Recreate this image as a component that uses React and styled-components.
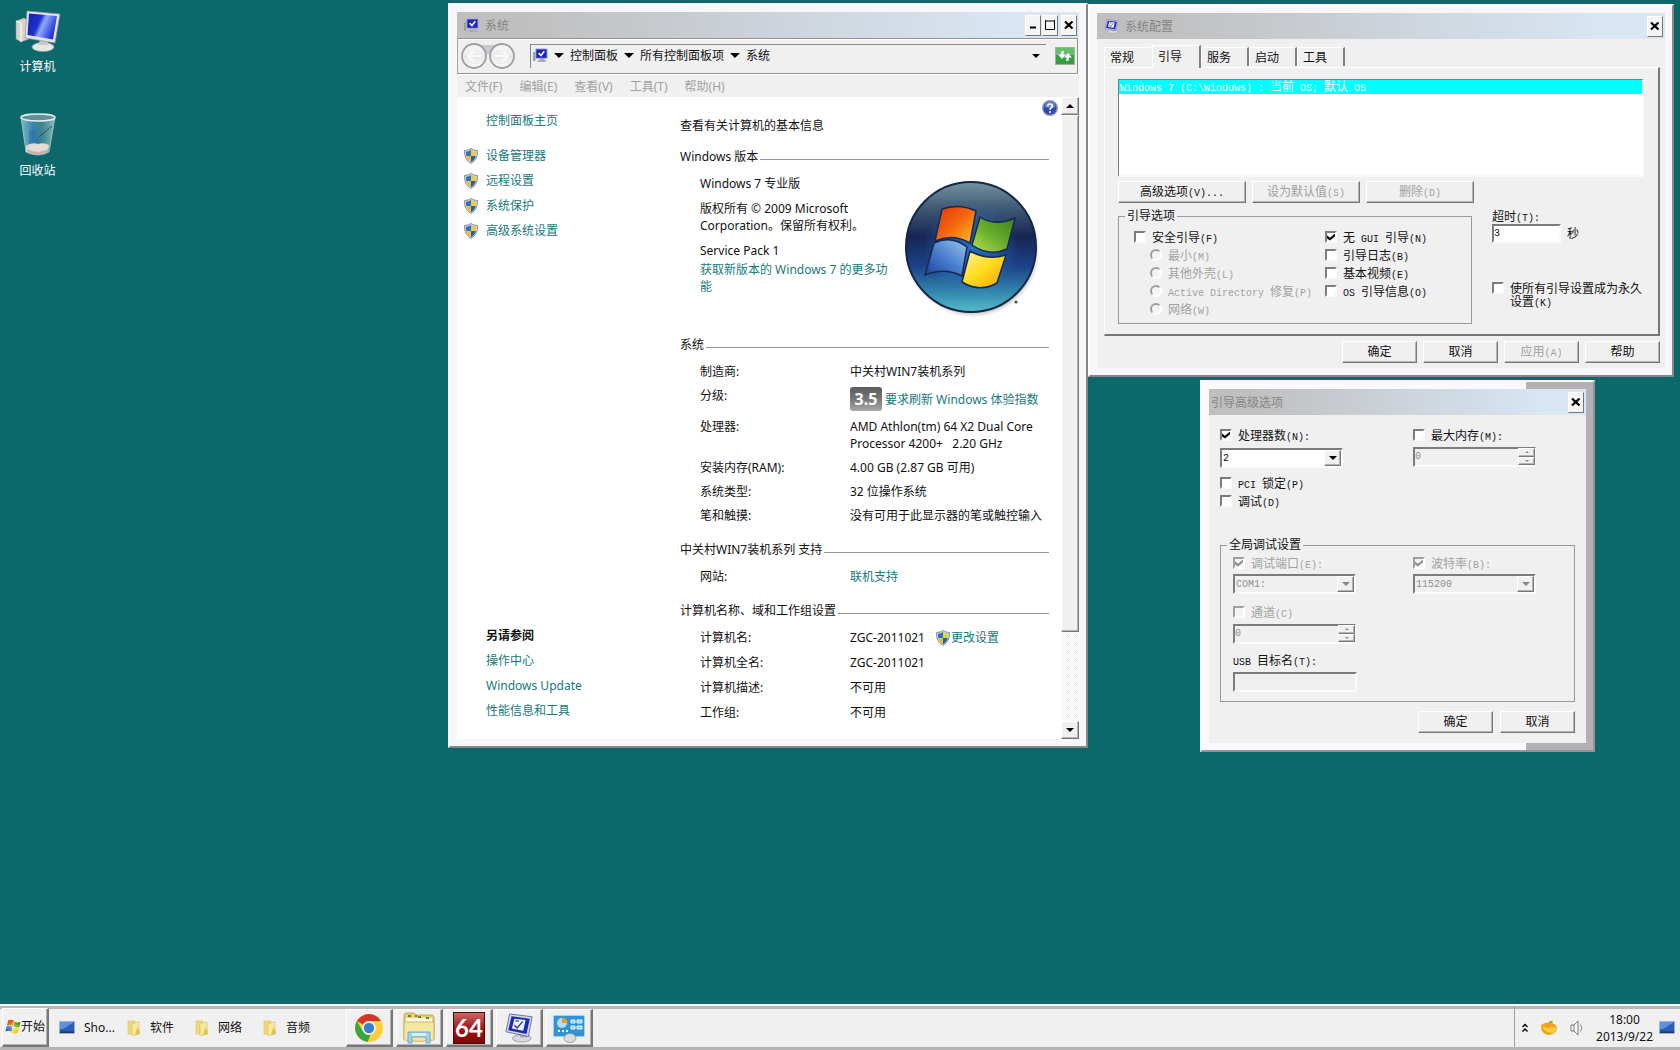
import { useState } from "react";
import styled, { createGlobalStyle, css } from "styled-components";

const GlobalStyle = createGlobalStyle`
  * {
    box-sizing: border-box;
  }
  body {
    margin: 0;
    font-family: "Noto Sans", "Noto Sans CJK SC", sans-serif;
    font-size: 12px;
    line-height: 17px;
    color: #111;
  }
  button, input, select {
    font: inherit;
    color: inherit;
    margin: 0;
    padding: 0;
  }
`;

const Desktop = styled.div`
  position: relative;
  display: flex;
  flex-direction: column;
  min-height: 100vh;
  overflow: hidden;
  background: #0d686b;
`;

const Shortcuts = styled.div`
  flex: 1;
  display: flex;
  flex-direction: column;
  align-items: flex-start;
  gap: 38px;
  padding-top: 9px;
`;

const Shortcut = styled.button`
  width: 75px;
  display: flex;
  flex-direction: column;
  align-items: center;
  gap: 5px;
  border: 0;
  background: none;
  color: #fff;
`;

/* ---------- shared window parts ---------- */

const Frame = styled.section`
  position: absolute;
  left: ${(p) => p.$x}px;
  top: ${(p) => p.$y}px;
  width: ${(p) => p.$width}px;
  padding: 7px;
  border: 2px solid;
  border-color: #fff #86868c #86868c #fff;
  background: #f7f7f9;
`;

const ShadedFrame = styled(Frame)`
  border-color: #fcfcfe #96949a #96949a #fcfcfe;
  background: linear-gradient(90deg, #fafafc 324px, #b4b0b4 324px);
`;

const Inner = styled.div`
  background: #f0f0f0;
`;

const TitleBar = styled.header`
  display: flex;
  align-items: center;
  height: 26px;
  padding: 0 2px 0 ${(p) => (p.$plain ? 2 : 7)}px;
  background: linear-gradient(90deg, #bfbfbf 10%, #d9e6f4 90%);
`;

const Title = styled.h1`
  flex: 1;
  margin: 0 0 0 ${(p) => (p.$plain ? 0 : 6)}px;
  font-size: 12px;
  font-weight: normal;
  color: #858585;
`;

const CaptionButton = styled.button`
  display: flex;
  align-items: center;
  justify-content: center;
  width: 16px;
  height: 21px;
  margin-left: ${(p) => (p.$apart ? 3 : 1)}px;
  border: 1px solid;
  border-color: #fff #777 #777 #fff;
  background: #f4f4f4;
`;

const raised = css`
  border: 1px solid;
  border-color: #fff #777 #777 #fff;
  box-shadow: inset -1px -1px 0 #b4b4b4;
  background: #f0f0f0;
`;

const sunken = css`
  border: 2px solid;
  border-color: #7c7c7c #fafafa #fafafa #7c7c7c;
  outline: 0;
`;

const Close = ({ apart }) => (
  <CaptionButton $apart={apart} aria-label="关闭">
    <svg width="10" height="8" viewBox="0 0 10 8">
      <path d="M1 0.5 8.500 7.500M8.500 0.500 1 7.500" stroke="#000" strokeWidth="2.200" />
    </svg>
  </CaptionButton>
);

const Triangle = ({ size = 10, up, color = "#000" }) => (
  <svg width={size} height={size / 2} viewBox="0 0 10 5">
    <path d={up ? "M0 5h10L5 0z" : "M0 0h10L5 5z"} fill={color} />
  </svg>
);

/* ---------- icons ---------- */

const ComputerIcon = () => (
  <svg width="46" height="44" viewBox="0 0 46 44">
    <defs>
      <linearGradient id="screen" x1="0" y1="0" x2="1" y2="0.4">
        <stop offset="0" stopColor="#1720a8" />
        <stop offset="0.45" stopColor="#2030cc" />
        <stop offset="0.6" stopColor="#8fa8ff" />
        <stop offset="1" stopColor="#2438d0" />
      </linearGradient>
    </defs>
    <path d="M1 12 9 9l5 3v18l-8 3-5-3z" fill="#d8d6cc" stroke="#8d8d86" strokeWidth="0.6" />
    <path d="M1 12l5 2v19" fill="none" stroke="#fff" />
    <ellipse cx="28" cy="38" rx="11" ry="4.500" fill="#e9e8e4" stroke="#999" strokeWidth="0.6" />
    <path d="M25 28h8v8h-9z" fill="#c9c8c4" />
    <path d="M12 2 45 5 40 34 10 29z" fill="#e5e4ee" stroke="#8b8ba0" strokeWidth="0.7" />
    <path d="M14 4.500 42 7 38 30.500 12.500 26z" fill="url(#screen)" />
  </svg>
);

const BinIcon = () => (
  <svg width="38" height="44" viewBox="0 0 38 44">
    <defs>
      <linearGradient id="glass" x1="0" y1="0" x2="1" y2="0">
        <stop offset="0" stopColor="#a9d4e4" stopOpacity="0.7" />
        <stop offset="0.35" stopColor="#3d86b4" stopOpacity="0.9" />
        <stop offset="0.6" stopColor="#5f9fae" stopOpacity="0.5" />
        <stop offset="1" stopColor="#b5d6d8" stopOpacity="0.8" />
      </linearGradient>
    </defs>
    <path d="M2 4 7 39q12 6 23 0L36 4z" fill="url(#glass)" stroke="#a9c8cc" strokeWidth="0.8" />
    <path d="M10 18q8-5 8 4l3 8-11 4z" fill="#2d6fb0" opacity="0.6" />
    <path d="M7 33q5-4 12-2 6-2 11 1l-1 6q-11 6-22 1z" fill="#e3dcd6" />
    <path d="M8 36q11 6 21 0l-1 4q-10 4-19 0z" fill="#c6b3ab" />
    <path d="M20 24 33 13" stroke="#3e4a50" />
    <ellipse cx="19" cy="4.500" rx="17" ry="3.500" fill="#63919a" stroke="#e6eef0" strokeWidth="1.400" />
  </svg>
);

const MonitorIcon = ({ size = 15 }) => (
  <svg width={size} height={size} viewBox="0 0 16 16">
    <path d="M0 4h3v10H0z" fill="#bbc2b8" />
    <path d="M1 5v8" stroke="#58645c" strokeDasharray="2 1" />
    <path d="M3 1h12v10H3z" fill="#1b24bb" stroke="#aab0d8" />
    <path d="M6 5.500 8.500 8 12 3.500" fill="none" stroke="#fff" strokeWidth="1.700" />
    <path d="M7 11h5v2h2v2H5v-2h2z" fill="#a9aac0" />
  </svg>
);

const ConfigIcon = ({ size = 15 }) => (
  <svg width={size} height={size} viewBox="0 0 32 32">
    <ellipse cx="19" cy="27" rx="10" ry="4" fill="#d8d8dc" stroke="#8e8e98" strokeWidth="0.8" />
    <path d="M17 20h8v6h-8z" fill="#a8a8b0" />
    <path d="M6 1 30 4 26 25 2 20z" fill="#d4d6ea" stroke="#6a6ea0" />
    <path d="M8 3.500 27.500 6 24 22.500 4.500 18.500z" fill="#1a2bb4" />
    <path d="M11 6 23 7.500 20.500 19 8.500 16.500z" fill="#eef2fb" />
    <path d="M11 13l3 3 6-7" fill="none" stroke="#25349c" strokeWidth="1.400" />
    <path d="M12 8.500h4" stroke="#25349c" strokeWidth="1.200" />
  </svg>
);

const Shield = () => (
  <svg width="14" height="16" viewBox="0 0 14 16">
    <path d="M7 0.500Q9.500 2.500 13.500 2.500 14 11.500 7 15.500 0 11.500 0.500 2.500 4.500 2.500 7 0.500z" fill="#d0d5da" stroke="#7d8894" strokeWidth="0.9" />
    <path d="M7 2Q5 3.500 2 3.700 2 6 2.300 8H7z" fill="#2c73c4" />
    <path d="M7 2Q9 3.500 12 3.700 12 6 11.700 8H7z" fill="#f5cc3c" />
    <path d="M2.300 8Q3 12 7 14.200V8z" fill="#f0bf2d" />
    <path d="M11.700 8Q11 12 7 14.200V8z" fill="#2261b2" />
  </svg>
);

const panes = [
  ["M37 28Q54 22 71 30L65 62Q48 52 30 60z", "paneRed"],
  ["M75 36Q90 46 110 37L102 68Q85 76 67 64z", "paneGreen"],
  ["M29 62Q46 54 62 66L57 95Q40 86 20 94z", "paneBlue"],
  ["M65 70Q82 80 101 74L92 102Q75 112 57 101z", "paneYellow"],
];

const LogoPanes = ({ outline }) =>
  panes.map(([d, id]) => (
    <path key={id} d={d} fill={`url(#${id})`} stroke={outline} strokeWidth="1.500" />
  ));

const WindowsLogo = () => (
  <svg width="138" height="138" viewBox="0 0 138 138">
    <defs>
      <linearGradient id="orb" x1="0" y1="0" x2="0" y2="1">
        <stop offset="0" stopColor="#7593a0" />
        <stop offset="0.2" stopColor="#3f5a74" />
        <stop offset="0.42" stopColor="#172554" />
        <stop offset="0.65" stopColor="#1c4288" />
        <stop offset="0.85" stopColor="#3388ae" />
        <stop offset="1" stopColor="#55bccb" />
      </linearGradient>
      <radialGradient id="orbShadow">
        <stop offset="0.88" stopColor="#555" stopOpacity="0.6" />
        <stop offset="1" stopColor="#fff" stopOpacity="0" />
      </radialGradient>
      <radialGradient id="glow">
        <stop offset="0" stopColor="#2d7fd0" stopOpacity="0.8" />
        <stop offset="1" stopColor="#2d7fd0" stopOpacity="0" />
      </radialGradient>
      <linearGradient id="paneRed" x1="0" y1="0" x2="1" y2="1">
        <stop offset="0" stopColor="#e2330c" />
        <stop offset="0.5" stopColor="#f4670f" />
        <stop offset="1" stopColor="#fdc52c" />
      </linearGradient>
      <linearGradient id="paneGreen" x1="1" y1="0" x2="0" y2="1">
        <stop offset="0" stopColor="#3d7f1c" />
        <stop offset="0.5" stopColor="#67ab2c" />
        <stop offset="1" stopColor="#b5e04e" />
      </linearGradient>
      <linearGradient id="paneBlue" x1="1" y1="0" x2="0" y2="1">
        <stop offset="0" stopColor="#9cc4ec" />
        <stop offset="0.5" stopColor="#4a80cf" />
        <stop offset="1" stopColor="#1c3f96" />
      </linearGradient>
      <linearGradient id="paneYellow" x1="0" y1="0" x2="1" y2="1">
        <stop offset="0" stopColor="#fff39a" />
        <stop offset="0.5" stopColor="#ffdc1c" />
        <stop offset="1" stopColor="#f39a10" />
      </linearGradient>
    </defs>
    <circle cx="68" cy="70" r="68" fill="url(#orbShadow)" />
    <circle cx="66" cy="66" r="65" fill="url(#orb)" stroke="#14264a" strokeWidth="2" />
    <circle cx="66" cy="68" r="48" fill="url(#glow)" />
    <LogoPanes outline="#16294f" />
    <circle cx="111" cy="121" r="1.500" fill="#444" />
  </svg>
);

const StartFlag = () => (
  <svg width="16" height="15" viewBox="18 22 94 86">
    <LogoPanes />
  </svg>
);

const RefreshIcon = () => (
  <svg width="20" height="18" viewBox="0 0 20 18">
    <rect x="0.5" y="0.5" width="19" height="17" fill="#35a043" stroke="#9bb49b" />
    <path d="M1 1h18v7H1z" fill="#67be6c" />
    <path d="M9 4H8Q6 4 6 6v1.500H3l4 4.500 4-4.500H8.500V6z" fill="#fff" />
    <path d="M11 14h1q2 0 2-2v-1.500h3L13 6 9 10.500h2.500V12z" fill="#fff" />
  </svg>
);

const HelpIcon = () => (
  <svg width="16" height="16" viewBox="0 0 16 16">
    <circle cx="8" cy="8" r="7.300" fill="#2b48b4" stroke="#8f98b4" strokeWidth="1.400" />
    <path d="M2.500 7a5.500 5.500 0 0 1 11 0q-5 2-11 0z" fill="#7f9be4" opacity="0.7" />
    <path d="M5.700 6.300Q5.800 4 8 4t2.300 2q0 1.300-1.300 2-1 .6-1 1.700" fill="none" stroke="#fff" strokeWidth="1.700" />
    <circle cx="8" cy="12" r="1.100" fill="#fff" />
  </svg>
);

const NavCircles = () => (
  <svg width="56" height="28" viewBox="0 0 56 28">
    <defs>
      <linearGradient id="nav" x1="0" y1="0" x2="0" y2="1">
        <stop offset="0" stopColor="#fbfbfb" />
        <stop offset="0.5" stopColor="#e8e8ea" />
        <stop offset="1" stopColor="#fafafa" />
      </linearGradient>
    </defs>
    <path d="M18 3h20v3q-6 2-10 7-4-5-10-7z" fill="#c9c9cc" />
    {[14, 42].map((cx) => (
      <circle key={cx} cx={cx} cy="14" r="12" fill="url(#nav)" stroke="#9d9da2" strokeWidth="1.800" />
    ))}
    <path d="M21 14H8m5-5-5 5 5 5M35 14h13m-5-5 5 5-5 5" fill="none" stroke="#fafafa" strokeWidth="2" />
  </svg>
);

const FolderIcon = () => (
  <svg width="14" height="16" viewBox="0 0 14 16">
    <path d="M1 1h7v13H1z" fill="#f1d878" stroke="#dcc05c" strokeWidth="0.6" />
    <path d="M5 3.500 12 2v12l-7 2z" fill="#f8e8a0" stroke="#d9bd58" strokeWidth="0.6" />
    <path d="M10 8q3 1 3 6l-5 1z" fill="#e5c04a" />
  </svg>
);

const ScreenIcon = () => (
  <svg width="16" height="13" viewBox="0 0 16 13">
    <path d="M0.500 0.500h15v12h-15z" fill="#2b5fb4" stroke="#9cb2d4" />
    <path d="M1 1h14L4 8H1z" fill="#5f92dc" />
    <path d="M1 10.500h14V12H1z" fill="#1c3566" />
  </svg>
);

const ChromeIcon = () => (
  <svg width="28" height="28" viewBox="0 0 28 28">
    <circle cx="14" cy="14" r="14" fill="#fbd03c" />
    <path d="M1.900 7A14 14 0 0 1 26.100 7H14a7 7 0 0 0-6.100 3.500z" fill="#d8352a" />
    <path d="M1.900 7 8 17.500A7 7 0 0 0 15.500 20.800L12.600 27.900A14 14 0 0 1 1.900 7z" fill="#37a446" />
    <circle cx="14" cy="14" r="6.800" fill="#f4f4f4" />
    <circle cx="14" cy="14" r="5.200" fill="#3a7fd0" />
  </svg>
);

const ExplorerIcon = () => (
  <svg width="32" height="32" viewBox="0 0 32 32">
    <path d="M1 4q0-3 2-3h8l2 2h16q2 0 2 3v21H1z" fill="#e9cf74" stroke="#b8983e" strokeWidth="0.8" />
    <path d="M3 6h26v5H3z" fill="#fdf8e0" />
    <path d="M1 10h30v18q-15 3-30 0z" fill="#f5e6a0" stroke="#c9ab52" strokeWidth="0.8" />
    <path d="M5 4h3M15 5h3M23 6h3" stroke="#3f9440" strokeWidth="1.800" />
    <path d="M12 4h2" stroke="#d2502c" strokeWidth="1.800" />
    <path d="M5 20h22v11h-4v-6H9v6H5z" fill="#9fd2ee" stroke="#5b9dc6" strokeWidth="0.8" />
    <path d="M9 21h14v3H9z" fill="#d8f0fb" />
  </svg>
);

const PanelIcon = () => (
  <svg width="32" height="30" viewBox="0 0 32 30">
    <rect x="0.5" y="2.500" width="31" height="21" rx="1" fill="#3293d4" stroke="#a7cfe6" />
    <circle cx="9" cy="10" r="5" fill="#b6dcf0" />
    <path d="M9 10V4.500a5.500 5.500 0 0 1 5.500 5.500z" fill="#f09a24" />
    <path d="M18 7h4v3h-4zM24 7h5v3h-5zM18 13h4v3h-4zM24 13h5v3h-5z" fill="#8fd0f2" stroke="#e6f6fd" />
    <path d="M5 18h2m2 0h2m2 0h2" stroke="#fff" strokeWidth="2" />
    <ellipse cx="17" cy="25" rx="6" ry="4.500" fill="#dcdcde" stroke="#8a8a8e" strokeWidth="0.8" />
  </svg>
);

const OrangeIcon = () => (
  <svg width="18" height="16" viewBox="0 0 18 16">
    <path d="M1 5q-1 8 7 10 8 0 9-7-1-5-7-5-5-1-9 2z" fill="#f7a01c" />
    <path d="M2 5q3 4 7 3 4-2 7 0 0 3-3 5-8 1-11-8z" fill="#fdd33a" />
    <path d="M8 3q2-3 5-2 0 3-5 2z" fill="#8db52c" />
  </svg>
);

const SpeakerIcon = () => (
  <svg width="15" height="16" viewBox="0 0 15 16">
    <path d="M1 5h3l4-4v14l-4-4H1zM4 5v6" fill="#f8f8f8" stroke="#777" />
    <path d="M10.500 4.500q3 3.500 0 7" fill="none" stroke="#888" />
  </svg>
);

/* ---------- system window ---------- */

const NavBand = styled.div`
  display: flex;
  align-items: center;
  height: 36px;
  margin-right: 1px;
  padding: 0 2px;
  border: 1px solid #929292;
  border-left-color: #a8a8a8;
  box-shadow: inset 0 1px 0 #fff, 0 1px 0 #fff;
`;

const Address = styled.nav`
  flex: 1;
  display: flex;
  align-items: center;
  gap: 6px;
  height: 24px;
  margin: 0 9px 0 14px;
  padding: 0 6px 2px 2px;
  border: 1px solid #8a8a8a;
  border-width: 1px 0 0 1px;
`;

const Crumb = styled.a`
  color: inherit;
  text-decoration: none;
`;

const Push = styled.span`
  margin-left: auto;
`;

const PlainButton = styled.button`
  display: flex;
  border: 0;
  background: none;
`;

const MenuBar = styled.div`
  display: flex;
  gap: 17px;
  height: 23px;
  padding: 2px 8px 0;
`;

const MenuButton = styled.button`
  border: 0;
  background: none;
  color: #a2a2a2;
`;

const SystemBody = styled.div`
  display: flex;
  background: #fff;
`;

const Side = styled.aside`
  display: flex;
  flex: none;
  flex-direction: column;
  justify-content: space-between;
  width: 223px;
  padding: 15px 0 20px 7px;
`;

const SideHome = styled.div`
  padding: 0 0 18px 22px;
`;

const SideList = styled.div`
  display: grid;
  grid-template-columns: 14px 1fr;
  gap: 8px;
  align-items: center;
`;

const AlsoList = styled.div`
  display: flex;
  flex-direction: column;
  gap: 8px;
  padding-left: 22px;
`;

const Link = styled.a`
  color: #16797b;
  text-decoration: none;
`;

const Main = styled.main`
  flex: 1;
  padding: 20px 0 18px;
`;

const Heading = styled.h2`
  margin: 0;
  font-size: 12px;
  font-weight: normal;
`;

const SectionTitle = styled.h3`
  display: flex;
  align-items: center;
  margin: ${(p) => p.$top}px 0 10px;
  font-size: 12px;
  font-weight: normal;

  &::after {
    content: "";
    flex: 1;
    margin: 5px 0 0 2px;
    border-top: 1px solid #949494;
  }
`;

const Edition = styled.div`
  display: flex;
  justify-content: space-between;
  padding-left: 20px;
  height: 120px;
`;

const EditionText = styled.div`
  width: 196px;

  p {
    margin: 0 0 8px;
  }
  p:last-of-type {
    margin-bottom: 2px;
  }
`;

const LogoBox = styled.div`
  width: 144px;
  height: 138px;
  margin-top: 6px;
`;

const Facts = styled.dl`
  display: grid;
  grid-template-columns: 150px 1fr;
  row-gap: ${(p) => p.$gap}px;
  margin: 0;
  padding-left: 20px;
  white-space: nowrap;
`;

const Value = styled.dd`
  display: flex;
  align-items: center;
  margin: 0;
  white-space: pre;
`;

const Score = styled.span`
  width: 32px;
  height: 24px;
  margin-right: 3px;
  border-radius: 3px;
  background: linear-gradient(#5c5c5c, #777 50%, #a8a8a8);
  color: #fff;
  font-size: 16px;
  font-weight: bold;
  line-height: 24px;
  text-align: center;
`;

const ChangeLink = styled(Link)`
  display: flex;
  align-items: center;
  gap: 1px;
  margin-left: 11px;
`;

const HelpColumn = styled.div`
  width: 12px;
  display: flex;
  justify-content: flex-end;
  align-items: flex-start;
  padding: 3px 3px 0 0;
`;

const ScrollBar = styled.div`
  display: flex;
  flex-direction: column;
  width: 18px;
  background: repeating-conic-gradient(#fff 0 25%, #f1f1f1 0 50%) 0 0 / 2px 2px;
`;

const ScrollButton = styled.button`
  ${raised}
  display: flex;
  align-items: center;
  justify-content: center;
  height: 18px;
`;

const Thumb = styled.div`
  ${raised}
  flex: 1;
  margin-bottom: 89px;
`;

const SystemWindow = () => (
  <Frame $x={448} $y={3} $width={640}>
    <Inner>
      <TitleBar>
        <MonitorIcon />
        <Title>系统</Title>
        <CaptionButton aria-label="最小化">
          <svg width="8" height="8">
            <path d="M1 6.500h6" stroke="#000" strokeWidth="2" />
          </svg>
        </CaptionButton>
        <CaptionButton aria-label="最大化">
          <svg width="10" height="10">
            <path d="M0.500 0v9.500h9V0M0 1h10" fill="none" stroke="#000" />
          </svg>
        </CaptionButton>
        <Close apart />
      </TitleBar>
      <NavBand>
        <NavCircles />
        <Address>
          <MonitorIcon />
          <Triangle />
          <Crumb href="#panel">控制面板</Crumb>
          <Triangle />
          <Crumb href="#items">所有控制面板项</Crumb>
          <Triangle />
          <Crumb href="#system">系统</Crumb>
          <Push>
            <PlainButton aria-label="历史">
              <Triangle size={8} />
            </PlainButton>
          </Push>
        </Address>
        <PlainButton aria-label="刷新">
          <RefreshIcon />
        </PlainButton>
      </NavBand>
      <MenuBar>
        {["文件(F)", "编辑(E)", "查看(V)", "工具(T)", "帮助(H)"].map((item) => (
          <MenuButton key={item}>{item}</MenuButton>
        ))}
      </MenuBar>
      <SystemBody>
        <Side>
          <div>
            <SideHome>
              <Link href="#home">控制面板主页</Link>
            </SideHome>
            <SideList>
              <Shield />
              <Link href="#devices">设备管理器</Link>
              <Shield />
              <Link href="#remote">远程设置</Link>
              <Shield />
              <Link href="#protect">系统保护</Link>
              <Shield />
              <Link href="#advanced">高级系统设置</Link>
            </SideList>
          </div>
          <AlsoList>
            <strong>另请参阅</strong>
            <Link href="#action">操作中心</Link>
            <Link href="#update">Windows Update</Link>
            <Link href="#perf">性能信息和工具</Link>
          </AlsoList>
        </Side>
        <Main>
          <Heading>查看有关计算机的基本信息</Heading>
          <SectionTitle $top={14}>Windows 版本</SectionTitle>
          <Edition>
            <EditionText>
              <p>Windows 7 专业版</p>
              <p>版权所有 © 2009 Microsoft Corporation。保留所有权利。</p>
              <p>Service Pack 1</p>
              <Link href="#more">获取新版本的 Windows 7 的更多功能</Link>
            </EditionText>
            <LogoBox>
              <WindowsLogo />
            </LogoBox>
          </Edition>
          <SectionTitle $top={41}>系统</SectionTitle>
          <Facts $gap={7}>
            <dt>制造商:</dt>
            <Value>中关村WIN7装机系列</Value>
            <dt>分级:</dt>
            <Value>
              <Score>3.5</Score>
              <Link href="#score">要求刷新 Windows 体验指数</Link>
            </Value>
            <dt>处理器:</dt>
            <Value>{"AMD Athlon(tm) 64 X2 Dual Core\nProcessor 4200+   2.20 GHz"}</Value>
            <dt>安装内存(RAM):</dt>
            <Value>4.00 GB (2.87 GB 可用)</Value>
            <dt>系统类型:</dt>
            <Value>32 位操作系统</Value>
            <dt>笔和触摸:</dt>
            <Value>没有可用于此显示器的笔或触控输入</Value>
          </Facts>
          <SectionTitle $top={17}>中关村WIN7装机系列 支持</SectionTitle>
          <Facts $gap={8}>
            <dt>网站:</dt>
            <Value>
              <Link href="#support">联机支持</Link>
            </Value>
          </Facts>
          <SectionTitle $top={17}>计算机名称、域和工作组设置</SectionTitle>
          <Facts $gap={8}>
            <dt>计算机名:</dt>
            <Value>
              ZGC-2011021
              <ChangeLink href="#rename">
                <Shield />
                更改设置
              </ChangeLink>
            </Value>
            <dt>计算机全名:</dt>
            <Value>ZGC-2011021</Value>
            <dt>计算机描述:</dt>
            <Value>不可用</Value>
            <dt>工作组:</dt>
            <Value>不可用</Value>
          </Facts>
        </Main>
        <HelpColumn>
          <PlainButton aria-label="获取帮助">
            <HelpIcon />
          </PlainButton>
        </HelpColumn>
        <ScrollBar>
          <ScrollButton aria-label="向上滚动">
            <Triangle size={8} up />
          </ScrollButton>
          <Thumb />
          <ScrollButton aria-label="向下滚动">
            <Triangle size={8} />
          </ScrollButton>
        </ScrollBar>
      </SystemBody>
    </Inner>
  </Frame>
);

/* ---------- dialogs ---------- */

const Latin = styled.span`
  font-family: "Liberation Mono", monospace;
  font-size: 10px;
  line-height: 0;
`;

// Dialog captions use a fixed half-width face for everything that is not Chinese
const Caption = ({ children }) => (
  <span>
    {children
      .split(/([\x20-\x7e]+)/)
      .filter(Boolean)
      .map((part, i) => (/^[\x20-\x7e]/.test(part) ? <Latin key={i}>{part}</Latin> : part))}
  </span>
);

const PushButton = styled.button`
  ${raised}
  width: ${(p) => p.$width || 75}px;
  height: 22px;
  line-height: 18px;

  &:disabled {
    color: #a0a0a0;
  }
`;

const Check = styled.label`
  display: flex;
  align-items: ${(p) => (p.$wrap ? "flex-start" : "center")};
  gap: 6px;
  min-height: 18px;
  padding-left: ${(p) => (p.$indent ? 16 : 0)}px;
  line-height: ${(p) => (p.$wrap ? 13 : 17)}px;
  color: ${(p) => (p.$disabled ? "#a2a2a2" : "inherit")};
  white-space: ${(p) => (p.$wrap ? "normal" : "pre")};
`;

const Box = styled.input`
  ${sunken}
  appearance: none;
  flex: none;
  display: flex;
  align-items: center;
  justify-content: center;
  width: 12px;
  height: 12px;
  background: #fff;

  &[type="radio"] {
    border-radius: 50%;
  }
  &:disabled {
    background: #f4f4f4;
    border-color: #a0a0a0 #fff #fff #a0a0a0;
  }
  &:checked::before {
    content: "";
    width: 8px;
    height: 7px;
    background: ${(p) => (p.disabled ? "#909090" : "#000")};
    clip-path: polygon(0 30%, 38% 62%, 100% 0, 100% 40%, 38% 100%, 0 70%);
  }
`;

const Tick = ({ label, type = "checkbox", checked = false, disabled, indent, wrap, name }) => {
  const [on, setOn] = useState(checked);
  return (
    <Check $disabled={disabled} $indent={indent} $wrap={wrap}>
      <Box type={type} name={name} checked={on} disabled={disabled} onChange={(e) => setOn(e.target.checked)} />
      <Caption>{label}</Caption>
    </Check>
  );
};

const Group = styled.fieldset`
  min-width: 0;
  margin: 0;
  padding: ${(p) => p.$pad};
  border: 1px solid #9a9a9a;
`;

const Legend = styled.legend`
  margin-left: ${(p) => p.$left || 0}px;
  padding: 0 2px;
  line-height: 16px;
`;

const Columns = styled.div`
  display: grid;
  grid-template-columns: ${(p) => p.$first}px 1fr;
  align-items: start;
`;

const Tabs = styled.div`
  display: flex;
  align-items: flex-end;
  height: 22px;
`;

const Tab = styled.button`
  width: 48px;
  height: 19px;
  margin-bottom: 1px;
  padding-left: 5px;
  border: 1px solid;
  border-color: #fff #808080 transparent #fff;
  border-width: 1px 2px 0 1px;
  background: #f0f0f0;
  text-align: left;

  &[aria-selected="true"] {
    width: 49px;
    height: 23px;
    margin-bottom: -1px;
    padding-bottom: 2px;
  }
  &:has(+ [aria-selected="true"]) {
    border-right-color: #f0f0f0;
  }
`;

const ConfigBody = styled.div`
  padding: 6px 5px 5px 7px;
`;

const TabPanel = styled.div`
  padding: 11px 14px 10px 13px;
  border: 1px solid;
  border-color: #fff #777 #777 #fff;
  border-width: 1px 2px 2px 1px;
`;

const ListBox = styled.ul`
  ${sunken}
  min-height: 98px;
  margin: 0 0 4px;
  padding: 0;
  border-width: 1px 2px 2px 1px;
  background: #fff;
  list-style: none;
`;

const ListItem = styled.li`
  height: 14px;
  padding-left: 1px;
  line-height: 14px;
  background: #0ff;
  color: #fff;
  white-space: pre;
`;

const ButtonRow = styled.div`
  display: flex;
  gap: ${(p) => p.$gap || 6}px;
  justify-content: ${(p) => (p.$end ? "flex-end" : "flex-start")};
`;

const BootRow = styled.div`
  display: grid;
  grid-template-columns: 354px 1fr;
  column-gap: 20px;
  margin-top: 5px;
`;

const Timeout = styled.div`
  display: flex;
  flex-direction: column;
  gap: 39px;
`;

const FieldLabel = styled.label`
  display: block;
  height: ${(p) => p.$height || 16}px;
`;

const Field = styled.input`
  ${sunken}
  width: ${(p) => p.$width}px;
  height: ${(p) => p.$height || 19}px;
  background: ${(p) => (p.disabled ? "#f0f0f0" : "#fff")};
  font-family: "Liberation Mono", monospace;
  font-size: 10px;
`;

const Inline = styled.div`
  display: flex;
  align-items: center;
  gap: 6px;
`;

const Footer = styled.div`
  padding-top: 5px;
`;

const tabs = ["常规", "引导", "服务", "启动", "工具"];

const ConfigWindow = () => {
  const [tab, setTab] = useState("引导");
  return (
    <Frame $x={1088} $y={4} $width={586}>
      <Inner>
        <TitleBar>
          <ConfigIcon />
          <Title>系统配置</Title>
          <Close />
        </TitleBar>
        <ConfigBody>
          <Tabs role="tablist">
            {tabs.map((name) => (
              <Tab key={name} role="tab" aria-selected={name === tab} onClick={() => setTab(name)}>
                {name}
              </Tab>
            ))}
          </Tabs>
          <TabPanel role="tabpanel">
            <ListBox role="listbox" aria-label="操作系统">
              <ListItem role="option" aria-selected="true">
                <Caption>{"Windows 7 (C:\\Windows) : 当前 OS; 默认 OS"}</Caption>
              </ListItem>
            </ListBox>
            <ButtonRow>
              <PushButton $width={128}>
                <Caption>高级选项(V)...</Caption>
              </PushButton>
              <PushButton $width={108} disabled>
                <Caption>设为默认值(S)</Caption>
              </PushButton>
              <PushButton $width={108} disabled>
                <Caption>删除(D)</Caption>
              </PushButton>
            </ButtonRow>
            <BootRow>
              <Group $pad="4px 0 5px 15px">
                <Legend $left={-9}>引导选项</Legend>
                <Columns $first={191}>
                  <div>
                    <Tick label="安全引导(F)" />
                    <Tick type="radio" name="safe" label="最小(M)" indent disabled />
                    <Tick type="radio" name="safe" label="其他外壳(L)" indent disabled />
                    <Tick type="radio" name="safe" label="Active Directory 修复(P)" indent disabled />
                    <Tick type="radio" name="safe" label="网络(W)" indent disabled />
                  </div>
                  <div>
                    <Tick label="无 GUI 引导(N)" checked />
                    <Tick label="引导日志(B)" />
                    <Tick label="基本视频(E)" />
                    <Tick label="OS 引导信息(O)" />
                  </div>
                </Columns>
              </Group>
              <Timeout>
                <div>
                  <FieldLabel htmlFor="timeout">
                    <Caption>超时(T):</Caption>
                  </FieldLabel>
                  <Inline>
                    <Field id="timeout" $width={69} defaultValue="3" />
                    秒
                  </Inline>
                </div>
                <Tick label="使所有引导设置成为永久设置(K)" wrap />
              </Timeout>
            </BootRow>
          </TabPanel>
          <Footer>
            <ButtonRow $end>
              <PushButton>确定</PushButton>
              <PushButton>取消</PushButton>
              <PushButton disabled>
                <Caption>应用(A)</Caption>
              </PushButton>
              <PushButton>帮助</PushButton>
            </ButtonRow>
          </Footer>
        </ConfigBody>
      </Inner>
    </Frame>
  );
};

const BootBody = styled.div`
  padding: 11px 11px 10px 11px;
`;

const ControlBox = styled.div`
  position: relative;
  width: 123px;
  height: 20px;
  margin: ${(p) => p.$top || 2}px 0 ${(p) => p.$bottom || 0}px;
`;

const Drop = styled.select`
  ${sunken}
  appearance: none;
  width: 100%;
  height: 100%;
  padding-left: 1px;
  border-radius: 0;
  background: ${(p) => (p.disabled ? "#f0f0f0" : "#fff")};
  font-family: "Liberation Mono", monospace;
  font-size: 10px;
  opacity: 1;

  &:disabled {
    color: #909090;
  }
`;

const DropArrow = styled.span`
  ${raised}
  position: absolute;
  top: 2px;
  right: 2px;
  bottom: 2px;
  display: flex;
  align-items: center;
  width: 17px;
  justify-content: center;
  pointer-events: none;
`;

const SpinField = styled(Field)`
  width: 100%;
  height: 100%;
  color: #909090;
`;

const SpinButtons = styled.span`
  position: absolute;
  top: 2px;
  right: 1px;
  bottom: 1px;
  width: 17px;
  display: flex;
  flex-direction: column;
`;

const SpinButton = styled.button`
  ${raised}
  flex: 1;
  display: flex;
  align-items: center;
  justify-content: center;
  min-height: 0;
`;

const DropDown = ({ label, value, disabled, top, bottom }) => (
  <ControlBox $top={top} $bottom={bottom}>
    <Drop aria-label={label} disabled={disabled} defaultValue={value}>
      <option>{value}</option>
    </Drop>
    <DropArrow>
      <Triangle size={8} color={disabled ? "#8a8a8a" : "#000"} />
    </DropArrow>
  </ControlBox>
);

const Spin = ({ label, top, bottom }) => (
  <ControlBox $top={top} $bottom={bottom}>
    <SpinField aria-label={label} defaultValue="0" disabled />
    <SpinButtons>
      <SpinButton aria-label="增加" disabled>
        <Triangle size={4} up color="#8a8a8a" />
      </SpinButton>
      <SpinButton aria-label="减少" disabled>
        <Triangle size={4} color="#8a8a8a" />
      </SpinButton>
    </SpinButtons>
  </ControlBox>
);

const Debug = styled.div`
  margin-top: 27px;
  margin-bottom: 9px;
`;

const BootWindow = () => (
  <ShadedFrame $x={1200} $y={380} $width={395}>
    <Inner>
      <TitleBar $plain>
        <Title $plain>引导高级选项</Title>
        <Close />
      </TitleBar>
      <BootBody>
        <Columns $first={193}>
          <div>
            <Tick label="处理器数(N):" checked />
            <DropDown label="处理器数" value="2" top={4} bottom={6} />
            <Tick label="PCI 锁定(P)" />
            <Tick label="调试(D)" />
          </div>
          <div>
            <Tick label="最大内存(M):" />
            <Spin label="最大内存" />
          </div>
        </Columns>
        <Debug>
          <Group $pad="1px 0 9px 12px">
            <Legend $left={-6}>全局调试设置</Legend>
            <Columns $first={180}>
              <div>
                <Tick label="调试端口(E):" checked disabled />
                <DropDown label="调试端口" value="COM1:" disabled bottom={9} />
                <Tick label="通道(C)" disabled />
                <Spin label="通道" bottom={9} />
                <FieldLabel htmlFor="usb" $height={19}>
                  <Caption>USB 目标名(T):</Caption>
                </FieldLabel>
                <Field id="usb" $width={124} $height={20} disabled />
              </div>
              <div>
                <Tick label="波特率(B):" checked disabled />
                <DropDown label="波特率" value="115200" disabled />
              </div>
            </Columns>
          </Group>
        </Debug>
        <ButtonRow $end $gap={7}>
          <PushButton>确定</PushButton>
          <PushButton>取消</PushButton>
        </ButtonRow>
      </BootBody>
    </Inner>
  </ShadedFrame>
);

/* ---------- taskbar ---------- */

const Bar = styled.footer`
  display: flex;
  align-items: stretch;
  height: 46px;
  border-top: 2px solid #fafafa;
  border-bottom: 3px solid #b4b4b4;
  background: #f0f0f0;
  box-shadow: inset 0 3px 0 #b8b6b8;
`;

const StartButton = styled.button`
  ${raised}
  display: flex;
  align-items: center;
  gap: 0;
  width: 47px;
  margin: 2px 10px 0 2px;
  padding: 0 0 2px 2px;
  border-right-width: 2px;
  border-bottom-width: 2px;
`;

const QuickLaunch = styled.div`
  display: grid;
  grid-template-columns: repeat(4, 68px);
  flex: 0 0 287px;
  padding-top: 2px;
`;

const QuickButton = styled.button`
  display: flex;
  align-items: center;
  gap: 9px;
  border: 0;
  background: none;
`;

const TaskButton = styled.button`
  ${raised}
  display: flex;
  align-items: center;
  justify-content: center;
  width: 47px;
  margin: 3px 3px 0 0;
  border-right-width: 2px;
  border-bottom-width: 2px;
`;

const Badge64 = styled.span`
  width: 32px;
  height: 32px;
  border: 1px solid #4a0808;
  background: linear-gradient(#c86868, #a01818 50%, #7c0808);
  color: #fff;
  font-family: Lato, sans-serif;
  font-size: 24px;
  font-weight: bold;
  line-height: 30px;
`;

const Tray = styled.div`
  display: flex;
  align-items: center;
  gap: 12px;
  margin-left: auto;
  padding: 2px 5px 0 7px;
  border-left: 1px solid #a0a0a0;
`;

const Clock = styled.time`
  margin: 0 -6px 0 -1px;
  line-height: 17px;
  text-align: center;
`;

const Taskbar = () => (
  <Bar>
    <StartButton>
      <StartFlag />
      开始
    </StartButton>
    <QuickLaunch>
      <QuickButton>
        <ScreenIcon />
        Sho...
      </QuickButton>
      {["软件", "网络", "音频"].map((name) => (
        <QuickButton key={name}>
          <FolderIcon />
          {name}
        </QuickButton>
      ))}
    </QuickLaunch>
    <TaskButton aria-label="Chrome">
      <ChromeIcon />
    </TaskButton>
    <TaskButton aria-label="资源管理器">
      <ExplorerIcon />
    </TaskButton>
    <TaskButton>
      <Badge64>64</Badge64>
    </TaskButton>
    <TaskButton aria-label="系统配置">
      <ConfigIcon size={30} />
    </TaskButton>
    <TaskButton aria-label="控制面板">
      <PanelIcon />
    </TaskButton>
    <Tray>
      <PlainButton aria-label="显示隐藏的图标">
        <svg width="6" height="10" viewBox="0 0 6 10">
          <path d="M0.500 4 3 1.500 5.500 4M0.500 8.500 3 6l2.500 2.500" fill="none" stroke="#000" strokeWidth="1.400" />
        </svg>
      </PlainButton>
      <OrangeIcon />
      <SpeakerIcon />
      <Clock>
        18:00
        <br />
        2013/9/22
      </Clock>
      <ScreenIcon />
    </Tray>
  </Bar>
);

const App = () => (
  <>
    <GlobalStyle />
    <Desktop>
      <Shortcuts>
        <Shortcut>
          <ComputerIcon />
          计算机
        </Shortcut>
        <Shortcut>
          <BinIcon />
          回收站
        </Shortcut>
      </Shortcuts>
      <SystemWindow />
      <ConfigWindow />
      <BootWindow />
      <Taskbar />
    </Desktop>
  </>
);

export default App;
